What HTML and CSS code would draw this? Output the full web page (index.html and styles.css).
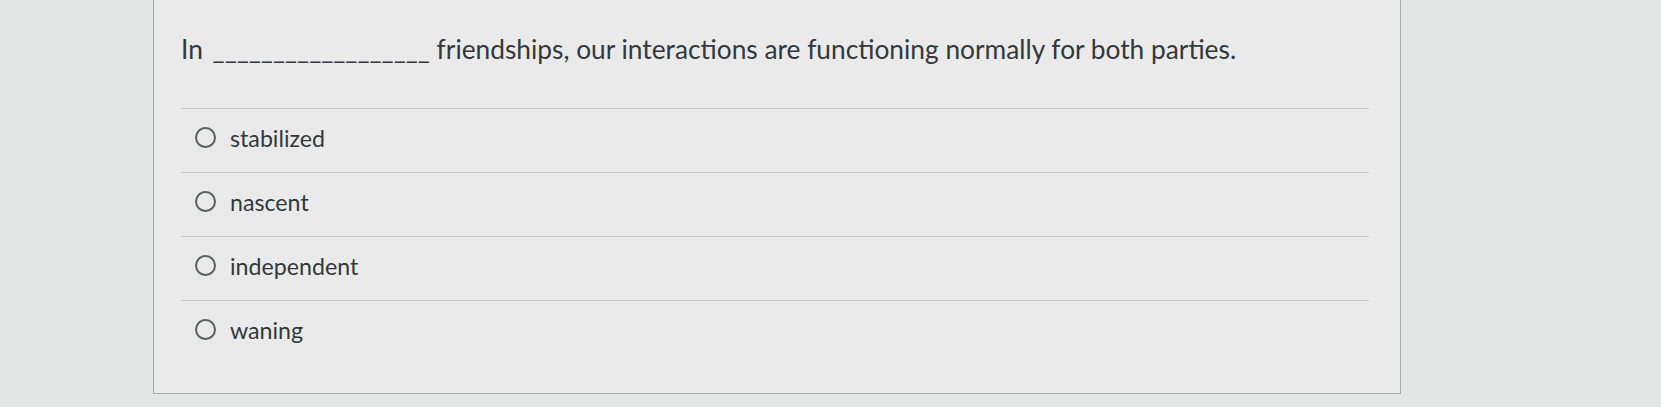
FILE: index.html
```html
<!DOCTYPE html>
<html>
<head>
<meta charset="utf-8">
<link rel="stylesheet" href="styles.css">
</head>
<body>
<div class="page">
  <div class="card">
    <div class="question">In <span class="blank">__________________</span> friendships, our interactions are functioning normally for both parties.</div>
    <ul class="answers">
      <li class="answer"><span class="radio"></span><span class="label">stabilized</span></li>
      <li class="answer"><span class="radio"></span><span class="label">nascent</span></li>
      <li class="answer"><span class="radio"></span><span class="label">independent</span></li>
      <li class="answer"><span class="radio"></span><span class="label">waning</span></li>
    </ul>
  </div>
</div>
</body>
</html>
```
FILE: styles.css
```css
html, body {
  margin: 0;
  padding: 0;
}
body {
  background: #e3e6e4;
  font-family: Lato, "Open Sans", sans-serif;
  color: #33383c;
  width: 1661px;
  height: 407px;
  overflow: hidden;
}
.page {
  padding-left: 153px;
}
.card {
  width: 1248px;
  height: 394px;
  box-sizing: border-box;
  background: #e9eae9;
  border: 1px solid #a9acab;
  border-top: none;
  padding: 0 31px 0 27px;
}
.question {
  font-size: 26.3px;
  line-height: 32px;
  padding-top: 33px;
  height: 108px;
  box-sizing: border-box;
}
.blank {
  margin-left: 3px;
}
.answers {
  list-style: none;
  margin: 0;
  padding: 0;
}
.answer {
  display: flex;
  align-items: center;
  gap: 14px;
  height: 64px;
  border-top: 1px solid #c6c9c8;
  padding-left: 14px;
  padding-bottom: 6px;
  box-sizing: border-box;
  font-size: 23.2px;
}
.radio {
  width: 17px;
  height: 17px;
  border: 2px solid #5a5e60;
  border-radius: 50%;
  flex: none;
}
.label {
  line-height: 28px;
}
```
